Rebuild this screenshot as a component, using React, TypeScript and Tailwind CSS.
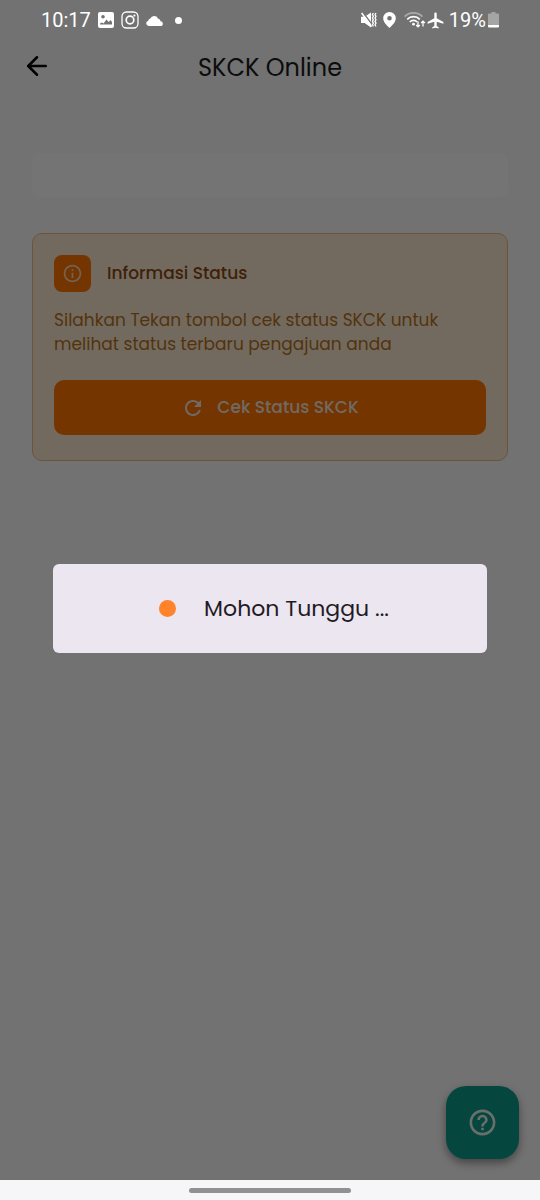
import { ArrowLeft } from "lucide-react";
import {
  MdAirplanemodeActive,
  MdHelpOutline,
  MdOutlineInfo,
  MdRefresh,
} from "react-icons/md";

function ImageIcon() {
  return (
    <svg viewBox="0 0 16 16" className="size-4" fill="currentColor" aria-hidden="true">
      <path
        fillRule="evenodd"
        d="M2 0h12a2 2 0 0 1 2 2v12a2 2 0 0 1-2 2H2a2 2 0 0 1-2-2V2a2 2 0 0 1 2-2Zm3 3a1.800 1.800 0 1 0 0 3.600 1.800 1.800 0 0 0 0-3.600ZM2 12.500h12v-2.200l-1.300-2.200-2 1.900-2.200-2.500-3 4-1.500-1L2 11.500Z"
      />
    </svg>
  );
}

function InstagramIcon() {
  return (
    <svg viewBox="0 0 18 18" className="size-[18px]" fill="none" stroke="currentColor" aria-hidden="true">
      <rect x="1" y="1" width="16" height="16" rx="4.500" strokeWidth="1.300" />
      <circle cx="9" cy="9" r="3.800" strokeWidth="1.700" />
      <circle cx="13.400" cy="4.600" r="1.100" fill="currentColor" stroke="none" />
    </svg>
  );
}

function CloudIcon() {
  return (
    <svg viewBox="0 0 18 11" className="h-[11px] w-[18px]" fill="currentColor" aria-hidden="true">
      <path d="M2.800 11a2.700 2.700 0 0 1-.6-5.300A2.800 2.800 0 0 1 4.300 3.600 4.200 4.200 0 0 1 12 3.400a3.400 3.400 0 0 1 2.600 2.900A2.500 2.500 0 0 1 15.500 11Z" />
    </svg>
  );
}

function MuteVibrateIcon() {
  return (
    <svg viewBox="0 0 16 16" className="size-4" fill="none" stroke="currentColor" aria-hidden="true">
      <path d="M0 4.800h3.600L10 .6v14.800L3.600 11H0Z" fill="currentColor" stroke="none" />
      <path d="M1.600 0 11.600 13" stroke="#727272" strokeWidth="1.300" />
      <path d="M.6 1 10.600 14.600" strokeWidth="1.600" />
      <path d="m12.400 1-1 1.600 1 1.700-1 1.700 1 1.700-1 1.700 1 1.700-1 1.700 1 1.700M15 1l-1 1.600 1 1.700-1 1.700 1 1.700-1 1.700 1 1.700-1 1.700 1 1.700" strokeWidth="1.300" />
    </svg>
  );
}

function PinIcon() {
  return (
    <svg viewBox="0 0 13 16" className="h-4 w-[13px]" fill="currentColor" aria-hidden="true">
      <path
        fillRule="evenodd"
        d="M6.500 0A6.300 6.300 0 0 0 .2 6.300C.2 10.300 4 13.500 6.500 16c2.500-2.500 6.300-5.700 6.300-9.700A6.300 6.300 0 0 0 6.500 0Zm0 4a2.300 2.300 0 1 1 0 4.600 2.300 2.300 0 0 1 0-4.600Z"
      />
    </svg>
  );
}

function WifiIcon() {
  return (
    <svg viewBox="0 0 22 16" className="h-4 w-[22px]" fill="none" stroke="currentColor" strokeWidth="1.700" aria-hidden="true">
      <path d="M.6 4.600a12.500 12.500 0 0 1 17.800 0" opacity=".4" />
      <path d="M3.200 7.300a8.900 8.900 0 0 1 12.600 0M5.800 10a5.200 5.200 0 0 1 7.400 0" />
      <circle cx="9.500" cy="12.200" r="1.400" fill="currentColor" stroke="none" />
      <path d="M14 9.500v5M12.200 13l1.800 1.900 1.800-1.900M19 14.500v-5M17.200 11 19 9.100l1.800 1.900" strokeWidth="1.300" />
    </svg>
  );
}

function BatteryIcon() {
  return (
    <svg viewBox="0 0 11 16" className="h-4 w-[11px]" aria-hidden="true">
      <path d="M3.500 0h4v1.500H10a1 1 0 0 1 1 1V13H0V2.500a1 1 0 0 1 1-1h2.500Z" fill="#a5a5a5" />
      <path d="M0 13h11v1.500a1 1 0 0 1-1 1H1a1 1 0 0 1-1-1Z" fill="#fff" />
    </svg>
  );
}

function StatusBar() {
  return (
    <div className="relative z-20 flex h-10 items-center justify-between px-[41px] font-[Roboto,sans-serif] text-xl text-white">
      <div className="flex items-center gap-[7px]">
        <span>10:17</span>
        <ImageIcon />
        <InstagramIcon />
        <CloudIcon />
        <span className="ml-1 size-[7px] rounded-full bg-white" />
      </div>
      <div className="flex items-center">
        <MuteVibrateIcon />
        <span className="mr-2 ml-1.5">
          <PinIcon />
        </span>
        <WifiIcon />
        <MdAirplanemodeActive className="mr-1 size-[19px]" />
        <span>19%</span>
        <span className="ml-0.5">
          <BatteryIcon />
        </span>
      </div>
    </div>
  );
}

function StatusCard() {
  return (
    <section className="mt-9 rounded-[10px] border border-[#f0b678] bg-[#f9e8ce] px-[21px] pt-[21px] pb-[25px]">
      <div className="flex items-center gap-4">
        <span className="grid size-[37px] place-items-center rounded-lg bg-[#ff7300] text-[#f9d5b0]">
          <MdOutlineInfo className="size-[21px]" />
        </span>
        <h2 className="text-[17px] font-medium text-[#8a4712]">Informasi Status</h2>
      </div>
      <p className="mt-4 text-[17px] leading-6 text-[#b5701c]">
        Silahkan Tekan tombol cek status SKCK untuk melihat status terbaru
        pengajuan anda
      </p>
      <button
        type="button"
        className="mt-6 flex h-[55px] w-full items-center justify-center gap-3 rounded-[10px] bg-[#ff7300] text-[17px] font-medium text-[#f4e6dc]"
      >
        <MdRefresh className="size-6" />
        Cek Status SKCK
      </button>
    </section>
  );
}

function LoadingDialog() {
  return (
    <div className="absolute inset-0 z-10 flex items-center bg-black/54 px-[53px] pt-9">
      <div
        role="dialog"
        aria-modal="true"
        aria-labelledby="loading-label"
        className="flex h-[89px] w-full items-center justify-center gap-7 rounded-md bg-[#ebe6f0] pl-2"
      >
        <span className="size-[17px] rounded-full bg-[#ff832b]" />
        <p id="loading-label" className="text-[22px] text-[#1f1b24]">
          Mohon Tunggu ...
        </p>
      </div>
    </div>
  );
}

export default function App() {
  return (
    <div className="flex min-h-screen flex-col font-[Poppins,Inter,sans-serif]">
      <div className="relative flex grow flex-col bg-[#f8f8f8]">
        <StatusBar />
        <header className="grid grid-cols-[1fr_auto_1fr] items-center px-[22px] pt-2">
          <a href="#back" aria-label="Kembali" className="-mt-1 justify-self-start text-black">
            <ArrowLeft className="size-[30px]" />
          </a>
          <h1 className="text-2xl leading-10 text-[#1c1c1c]">SKCK Online</h1>
        </header>
        <main className="px-8 pt-[65px]">
          <div className="h-11 rounded-lg bg-[#fcfcfc]" />
          <StatusCard />
        </main>
        <button
          type="button"
          aria-label="Bantuan"
          className="absolute right-[21px] bottom-[21px] grid size-[73px] place-items-center rounded-[20px] bg-[#0c9987] text-[#e6f2ee] shadow-[0_4px_8px_rgba(0,0,0,0.4)]"
        >
          <MdHelpOutline className="size-[31px]" />
        </button>
        <LoadingDialog />
      </div>
      <footer className="flex h-5 justify-center bg-[#f6f6f8] pt-2">
        <span className="h-[5px] w-[30%] rounded-full bg-[#919193]" />
      </footer>
    </div>
  );
}
